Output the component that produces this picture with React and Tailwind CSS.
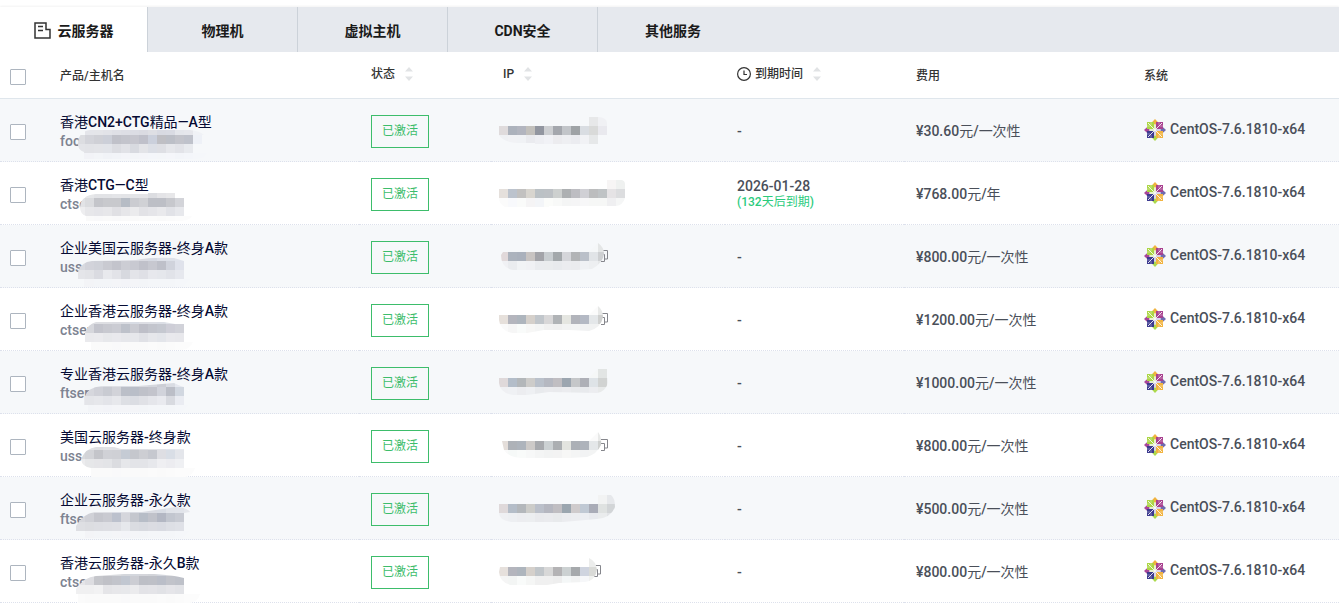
import { useState } from 'react';
import clsx from 'clsx';

const TABS = ['云服务器', '物理机', '虚拟主机', 'CDN安全', '其他服务'];

// Every mask is a strip of 9px blocks, cut off by an outline
const BLOCK = 9;

const SERVERS = [
  {
    id: 1,
    name: '香港CN2+CTG精品—A型',
    host: 'foc',
    price: '¥30.60元/一次性',
    hostMask: {
      outline: 'M2 18C2 9 7 5 14 4H114Q124 5 128 9L126 18H117V27H131Q129 32 122 33H8V26Q2 24 2 18Z',
      blocks: [
        '- e4e5ea e4e5e9 e2e3e8 dfe0e6 dddee5 dcdde4 dadbe2 dedfe4 d8dae2 d9dbe3 e4e6eb e6e7ec f0f2f6 f1f3f7',
        'dcdde1 d3d4da cfd0d6 cccfd8 c0c1c9 c3c4cc c6c6ce bfc0ca cbd0dc bfbfc4 bcbfc7 c3c4cb bfc2cb eef1f7',
        'e3e4e8 e2e3e7 e3e4e8 e2e4e9 dcdde2 e1e2e7 d8dae0 e3e4e8 dcdfe6 dedfe4 e6e7eb e2e3e8 e8eaee',
        'f2f3f7 f2f3f7 f3f5f8 f1f3f7 f2f4f8 f4f5f9 f3f5f8 f4f5f9 f4f6fa f4f6f9 f5f6fa f3f5f9 f4f6fa f5f7fa f5f7fa',
      ],
    },
    ipMask: {
      outline: 'M0 9H90V0H100Q108 1 108 6V18H99V27H36V26H18Q4 25 0 18Z',
      blocks: [
        '- - - - - - - - - - e7e8e9 f0f1f4',
        'dfdbdc acb2bc b2b5bf c2c0bc 9296a0 cdcfd2 a4a7ad c2c5c9 9fa3a6 d9dde2 d9dad9 e9e9ee',
        'eff1f4 f1f2f5 f0f2f5 eaebef eeeff3 f1f2f6 ececef eeeff2 ebecf0 f1f2f5 e6e8e9',
      ],
    },
  },
  {
    id: 2,
    name: '香港CTG—C型',
    host: 'ctse',
    expires: '2026-01-28',
    left: '(132天后到期)',
    price: '¥768.00元/年',
    hostMask: {
      outline: 'M4 18Q5 6 20 5H72V4H99V9H108V27H116Q114 31 106 32H10V27Q4 25 4 18Z',
      blocks: [
        '- e6e7e9 e2e3e6 e2e3e6 e4e5e8 e3e4e7 e4e5e8 e4e4e7 dcdde1 e4e4e7 e7e7e9',
        'e2e3e6 dbdcdf c4c5ca c8c9cd c8c9cd b6bcc5 cbccd1 d0d1d5 bdbfc6 bdbfc6 c7c8cd d3d4d9',
        'eeeef0 e7e7ea e5e5e9 e7e7ea e0e0e4 e6e6e9 ebebed e2e2e6 e5e5e9 e9e9ec e1e2e7 e7e8ec',
        'fafafa fafafa f9f9fa fafafa f9f9fa fafafa fafafa fbfbfb fbfbfb fafafa fbfbfb fcfcfc fcfcfc',
      ],
    },
    ipMask: {
      outline: 'M0 9H108V0H123Q126 1 126 4V18Q124 25 117 26H50V27H6Q0 24 0 18Z',
      blocks: [
        '- - - - - - - - - - - - f7f5f5 eff1f0',
        'e5e0dc bcc3cd c2c1c0 d8d5cf bbc1c5 bdc1c5 cdd0cf adb0b2 bdbdc2 d0d0d5 bcbdbe bfc3c5 e5e3e5 dcdddf',
        'fbfbfb f8f9fc fafbfa f5f4f5 f3f5f8 fbfcfa f8f9f8 f4f5f5 f5f5f6 f7f7f8 f6f7f6 f6f7f6 efeff1 f5f6f6',
      ],
    },
  },
  {
    id: 3,
    name: '企业美国云服务器-终身A款',
    host: 'uss',
    price: '¥800.00元/一次性',
    hostMask: {
      outline: 'M2 27V20Q5 10 16 9L60 8Q75 5 98 6L108 9V27H114L106 35H8V27Z',
      blocks: [
        '- dedfe5 dedfe5 dedfe5 dedfe5 dcdde3 dbdce2 d9dae1 d6dae3 dde0e8 dde1e9 e0e4ec',
        'd8dae0 d2d3da cfd1d8 c9cad1 c3c4cc cccdd4 c8c9d1 c0c1ca c7c8d0 bec0c9 d0d3dc dfe2eb',
        'e4e5e9 e2e3e7 dadbe1 e8e9ed e2e3e8 d7d9df e3e4e9 dfe0e6 e7e8ed e5e7ec e1e3e9 e6e8ee',
        'f3f4f7 f3f4f7 f3f5f8 f3f5f8 f4f5f8 f3f4f8 f4f5f8 f3f5f8 f4f6f9 f4f6f9 f4f6f9 f5f7fa f5f7fa',
      ],
    },
    ipMask: {
      outline: 'M4 9H90L99 0Q105 4 105 11Q104 20 93 26L78 27H14Q2 25 2 12Z',
      blocks: [
        '- - - - - - - - - - f5f7f8 e4e6e6',
        'e1d9da acb3bd aab1bc c8c4c2 a3a4a9 c8cdd0 a3a8ab d5d6da b2b4b6 bac0c9 e1e4e7 ced0d2',
        'f0f1f4 eaecef f1f3f5 f0f1f4 eaecef eaecee e8eaed ebecef eaebee eff1f4 edeff1 e6e8e9',
      ],
    },
    copyIcon: 'left-[110px]',
  },
  {
    id: 4,
    name: '企业香港云服务器-终身A款',
    host: 'ctser',
    price: '¥1200.00元/一次性',
    hostMask: {
      outline: 'M9 27V18Q12 9 20 7H88L99 9H108V27H117Q114 34 106 35H15V27Z',
      blocks: [
        '- dddee2 dedfe3 dedfe3 dcdde2 dadce2 d8dce4 dddee4 dddfe5 dbdee5 e0e3e9 e5e8ed',
        '- d6d7dc c3c4cc c8c9d0 cbccd3 bdc1ca cacbd2 bebfc8 c3c5cd c5c8d0 ceced7 d1d2d9',
        'efeff1 eaeaed ebebee e7e8eb e9e9ed e6e7eb e6e7eb e0e1e6 e6e7eb e3e5ea e9e9ed e8e8ec',
        '- fafafa fafafa fafafa f9f9fa fafafa fafafa fafafa fbfbfb fafafa fbfbfb fcfcfc fcfcfc',
      ],
    },
    ipMask: {
      outline: 'M0 9H90L99 0Q104 4 104 11Q102 22 90 25L70 24L45 24L28 27H14Q1 25 0 14Z',
      blocks: [
        '- - - - - - - - - - fbfbfb e8e9e8',
        'e6e0db b4b5bd aeb5bd d5d0cb c1c6cb d8d7d8 b0b3b6 e5e6e1 b2b4bb b4b9c4 e4e7e9 cfd0cf',
        'fafafa f6f6f6 f9fbfa f7f7f6 f4f5f5 f1f1f1 f0f0f0 f2f3f3 f3f4f4 f1f2f3 f1f2f2 f2f2f1',
      ],
    },
    copyIcon: 'left-[110px]',
  },
  {
    id: 5,
    name: '专业香港云服务器-终身A款',
    host: 'ftser',
    price: '¥1000.00元/一次性',
    hostMask: {
      outline: 'M8 27V20Q12 9 25 8H62L98 5Q104 8 108 9V27H112L106 34H12V27Z',
      blocks: [
        '- dfe0e5 dfe0e5 dcdde2 dfe0e5 d9dce3 d9dbe1 d9dae0 d5d7dd ccced5 d9dce3 e5e8ef',
        '- d6d7dd d0d1d8 c9cbd2 d2d3d9 bbbfc8 b9bec8 bfc1c9 c3c4cc d1d3db bbbec7 d1d7e0',
        'e9eaee e4e5e9 e6e7eb e3e4e9 e7e8ec dddfe4 dbdde3 e0e1e6 e5e6eb e9eaef d8dae0 eaecf2',
        '- f3f5f8 f4f5f8 f3f4f8 f4f5f8 f4f5f8 f4f5f8 f3f5f8 f4f6f9 f4f6f9 f4f6f9 f5f7fa f5f7fa',
      ],
    },
    ipMask: {
      outline: 'M0 9H90L99 0H108L109 14Q106 23 98 24L50 23L28 26H14Q1 24 0 14Z',
      blocks: [
        '- - - - - - - - - - f5f7f7 e2e5e4',
        'dfd9da b3bdc9 b3b7ba cdccca bac1cb b5b8c1 c0bec2 9ca6b0 c5c7c9 aeb0b7 dee3e7 d1d3d2 eef0f2',
        'eff0f3 eff1f4 ecedf0 eef0f3 e8eaed eaebee e9eaed ebecef e8eaec e8eaed ecedf0 e8eaea eef0f2',
      ],
    },
  },
  {
    id: 6,
    name: '美国云服务器-终身款',
    host: 'uss',
    price: '¥800.00元/一次性',
    hostMask: {
      outline: 'M5 18Q10 7 20 6H38L45 8H108V27H119Q116 35 110 36H15V27Q6 26 5 18Z',
      blocks: [
        '- e1e2e4 dedfe2 e1e2e5 e0e1e5 dcdfe4 dbdce0 dfe0e4 e2e3e6 e2e3e8 e2e6ed e8eaee',
        'd8d9dc d3d4d8 c4c5ca d0d1d6 cfd0d5 c5cbd4 c5c7cd cdced3 c6c8cf dedee3 d9dee6 e4e6eb',
        'ececee e6e7e9 e5e5e8 e3e4e7 dbdce0 e6e7ea e3e4e8 e3e4e8 e7e8ec efeff2 ececf0 eff0f3',
        '- fafafa fafafa fafafa f9f9fa fafafa fafafa fafafa fbfbfb fafafa fbfbfb fcfcfc fcfcfc fcfcfc',
      ],
    },
    ipMask: {
      outline: 'M3 9H90L99 0Q103 5 102 13Q98 22 88 25L70 26H32Q10 27 5 18Z',
      blocks: [
        '- - - - - - - - - - fafafa e8e9e8',
        'e4deda aeb2b8 aeb4bc cdcac8 a8aaae ccd1d3 acafb2 e3e4df acb0b6 aeb3bb e4e7e9 ced0cf',
        'fafafa f6f9f8 f9fbfa f7f8f8 f4f5f5 f2f3f3 f3f3f3 f7f7f6 f4f5f5 f2f3f4 f3f4f4 f2f2f1',
      ],
    },
    copyIcon: 'left-[110px]',
  },
  {
    id: 7,
    name: '企业云服务器-永久款',
    host: 'ftse',
    price: '¥500.00元/一次性',
    hostMask: {
      outline: 'M0 27V22Q7 10 18 8H66L100 3Q112 4 114 8L108 9V27H114L106 34H8V27Z',
      blocks: [
        'e4e5e9 e0e1e5 dfe0e5 dedfe4 dbdde5 dddee4 d9dce3 d8dbe2 d9dbe2 d8dce4 e0e3e9 e1e4ea e5e7ec',
        'd6d7dc d0d1d7 c5c6cd c9cad1 bcc1cd d5d6dc c4c7ce b7bdc7 c0c2ca b3b7c3 c2c6cf c8cbd3 d3d9e2',
        'dedfe3 dcdde1 dddee3 dedfe4 dfe0e5 e6e8ec dadce1 d8dae0 dbdce2 d9dbe2 dddfe5 dfe1e7 e5e7ec',
        '- f3f4f7 f3f5f8 f3f5f8 f4f5f8 f3f4f8 f4f5f8 f3f5f8 f4f6f9 f4f6f9 f4f6f9 f5f7fa f5f7fa',
      ],
    },
    ipMask: {
      outline: 'M0 9H99V0H112Q116 3 116 12Q112 23 98 24L64 27H12Q0 25 0 18Z',
      blocks: [
        '- - - - - - - - - - - f2f3f3 e6e8eb',
        'dfd9da b4bdc8 b3b7bb ccccc9 bbc0ca b5b7c0 c0bec2 9ba6af cfcbcc c0c9d4 a9acb7 dfe2e1 d2d5d7',
        'eff0f3 edeff2 ecedf0 eceef0 e9eaed eaebee e8eaec ebecef ecedf0 eceef2 e8eaee eaeced e2e4e7',
      ],
    },
  },
  {
    id: 8,
    name: '香港云服务器-永久B款',
    host: 'ctse',
    price: '¥800.00元/一次性',
    hostMask: {
      outline: 'M0 27V22Q8 10 20 9L48 7H78Q98 8 108 11V27H124Q122 35 114 36H2V27Z',
      blocks: [
        '- e1e1e4 dcdde1 dadbdf d8dade d4d7dc d4d7dd d5d6db d2d4d9 d2d5dc d8dade d9dbdf',
        'e5e5e8 dddde1 c5c6cb c0c1c7 c2c4cb c1c7d1 cccdd3 bdbfc6 bec0c7 babec8 c1c3ca bec1c9',
        'f0f0f1 f0f0f1 f2f2f3 e5e5e8 e7e7ea e7e8eb ebebed e3e3e7 e4e4e8 e1e2e6 e5e5e9 e2e3e7',
        'fbfbfb fafafa fafafa fafafa fafafa f9f9fa fafafa fafafa fafafa fbfbfb fafafa fbfbfb fcfcfc fcfcfc',
      ],
    },
    ipMask: {
      outline: 'M1 9H90V0Q97 3 98 12Q96 23 86 24L60 25L48 27H12Q1 25 0 14Z',
      blocks: [
        '- - - - - - - - - - ecedec',
        'e6e0dc b4b5bd aeb5bd d5d0cb c1c6ca d8d8d8 b4b3b5 ccd1d2 a6a9ac cfd4df d9dad7',
        'f5f5f5 f3f5f4 f9fbfa f5f6f5 f0f0f0 f0f0f0 eeeeee f4f7f7 f2f3f3 f6f7f9 f0f1ef',
      ],
    },
    copyIcon: 'left-[103px]',
  },
];

function Mask({ id, mask, className }) {
  return (
    <svg className={clsx('pointer-events-none absolute', className)} width="144" height="36" shapeRendering="crispEdges" aria-hidden="true">
      <clipPath id={id}>
        <path d={mask.outline} />
      </clipPath>
      <g clipPath={`url(#${id})`}>
        {mask.blocks.map((line, y) =>
          line.split(' ').map((color, x) =>
            color === '-' ? null : (
              <rect key={`${x}-${y}`} x={x * BLOCK} y={y * BLOCK} width={BLOCK} height={BLOCK} fill={`#${color}`} />
            )
          )
        )}
      </g>
    </svg>
  );
}

function CopyIcon() {
  return (
    <svg width="8" height="14" viewBox="0 0 8 14" fill="none" stroke="#85868c" aria-hidden="true">
      <path d="M0 1.5h6.500v8.500h-3M0 5.500h3.500v7H0" />
    </svg>
  );
}

function ServerIcon() {
  return (
    <svg width="17" height="17" viewBox="0 0 17 17" fill="none" stroke="#333" strokeWidth="1.500" aria-hidden="true">
      <path d="M12 7.500V1H1v15h15V7.500h-4.700" />
      <path d="M4 4.500h5M4 8.500h5" />
    </svg>
  );
}

function ClockIcon() {
  return (
    <svg width="14" height="14" viewBox="0 0 14 14" fill="none" stroke="#333" strokeWidth="1.200" aria-hidden="true">
      <circle cx="7" cy="7" r="6.400" />
      <path d="M7 3.500V7.500h3" />
    </svg>
  );
}

function SortIcon() {
  return (
    <svg width="8" height="14" viewBox="0 0 8 14" fill="#e1e3e5" aria-hidden="true">
      <path d="M4 0l4 4.500H0zM4 14L0 9.500h8z" />
    </svg>
  );
}

function CentosIcon() {
  return (
    <svg width="22" height="22" viewBox="0 0 22 22" className="shrink-0" aria-hidden="true">
      <path d="M11 0l2.800 3-2.800 3-2.800-3z" fill="#f0b33f" />
      <path d="M22 11l-3 2.800-3-2.800 3-2.800z" fill="#6f6bb0" />
      <path d="M11 22l-2.800-3 2.800-3 2.800 3z" fill="#acd94c" />
      <path d="M0 11l3-2.800 3 2.800-3 2.800z" fill="#a8479a" />
      <path d="M3 3h7v7H3z" fill="#acd645" />
      <path d="M12 3h7v7h-7z" fill="#a8408f" />
      <path d="M3 12h7v7H3z" fill="#3d3b90" />
      <path d="M12 12h7v7h-7z" fill="#f2b440" />
      <path d="M11 5.500V11H5.500" stroke="#d3e6a4" fill="none" />
      <path d="M11 16.500V11h5.500" stroke="#b9aed4" fill="none" />
      <path d="M4 4l14 14M18 4L4 18" stroke="#fff" strokeWidth="1" opacity="0.850" />
      <path d="M7 3v3M15 3v3M7 19v-3M15 19v-3M3 7h3M3 15h3M19 7h-3M19 15h-3" stroke="#fff" strokeWidth="0.600" opacity="0.600" />
    </svg>
  );
}

function Checkbox(props) {
  return (
    <input
      type="checkbox"
      className="mt-1 block size-4 appearance-none rounded-[1px] border border-[#adb5bf] bg-white checked:bg-[#3dbd6b]"
      {...props}
    />
  );
}

function SortButton({ children }) {
  return (
    <button type="button" className="flex items-center gap-2.5 pb-0.5">
      {children}
      <SortIcon />
    </button>
  );
}

// CJK glyphs stay regular while latin letters and digits are medium
function MixedText({ text }) {
  return text.split(/([\u4e00-\u9fff]+)/).map((part, i) => (
    <span key={i} className={i % 2 ? 'font-normal' : 'font-medium'}>
      {part}
    </span>
  ));
}

export default function App() {
  const [tab, setTab] = useState(TABS[0]);
  const [selected, setSelected] = useState([]);

  const toggle = (id) => {
    setSelected((ids) => (ids.includes(id) ? ids.filter((i) => i !== id) : [...ids, id]));
  };

  const toggleAll = () => {
    setSelected(selected.length === SERVERS.length ? [] : SERVERS.map((s) => s.id));
  };

  return (
    <div className="bg-white pt-[7px] font-[Roboto,'Noto_Sans_CJK_SC',sans-serif] text-sm text-[#4a4f59]">
      {/* Service tabs */}
      <nav className="flex h-[45px] bg-[#e6e9ee] shadow-[0_-1px_2px_rgba(0,0,0,0.05)]">
        {TABS.map((name, i) => (
          <button
            key={name}
            type="button"
            onClick={() => setTab(name)}
            className={clsx(
              'flex items-center justify-center gap-[7px] pt-0.5 font-bold text-[#1a1a1a]',
              i === 0 ? 'w-[148px]' : 'w-[150px]',
              i < TABS.length - 1 && 'border-r border-[#ccd2d9]',
              tab === name && 'bg-white'
            )}
          >
            {i === 0 && <ServerIcon />}
            {name}
          </button>
        ))}
      </nav>

      {/* Server list */}
      <div className="overflow-x-auto">
        <table className="w-full table-fixed border-separate border-spacing-0 text-left">
          <colgroup>
            <col className="w-[48px]" />
            <col className="w-[311px]" />
            <col className="w-[132px]" />
            <col className="w-[234px]" />
            <col className="w-[179px]" />
            <col className="w-[228px]" />
            <col className="w-[207px]" />
          </colgroup>
          <thead>
            <tr className="h-[47px] text-xs text-[#333] *:border-b *:border-[#dfe6ec] *:px-3 *:py-0 *:font-medium">
              <th className="pl-2.5!">
                <Checkbox aria-label="全选" checked={selected.length === SERVERS.length} onChange={toggleAll} />
              </th>
              <th className="pt-0.5!">产品/主机名</th>
              <th>
                <SortButton>状态</SortButton>
              </th>
              <th>
                <SortButton>IP</SortButton>
              </th>
              <th>
                <SortButton>
                  <span className="flex items-center gap-1">
                    <ClockIcon /> 到期时间
                  </span>
                </SortButton>
              </th>
              <th className="pt-0.5!">费用</th>
              <th className="pt-0.5!">系统</th>
            </tr>
          </thead>
          <tbody>
            {SERVERS.map((s) => (
              <tr
                key={s.id}
                className="h-[63px] odd:bg-[#f6f8fa] *:border-b *:border-dotted *:border-[#dde1ec] *:px-3 *:py-0"
              >
                <td className="pl-2.5!">
                  <Checkbox aria-label={s.name} checked={selected.includes(s.id)} onChange={() => toggle(s.id)} />
                </td>
                <td className="relative pt-0.5!">
                  <a href="#" className="block leading-5 text-[#060b33]">
                    <MixedText text={s.name} />
                  </a>
                  <span className="block leading-[18px] font-medium text-[#7d8391]">{s.host}</span>
                  <Mask id={`host-${s.id}`} mask={s.hostMask} className="top-[27px] left-7" />
                </td>
                <td>
                  <span className="mt-0.5 flex h-[33px] w-[58px] items-center justify-center border border-[#3dbd6b] text-xs text-[#3dbd6b]">
                    已激活
                  </span>
                </td>
                <td className="relative">
                  {s.copyIcon && (
                    <span className={clsx('absolute top-6', s.copyIcon)}>
                      <CopyIcon />
                    </span>
                  )}
                  <Mask id={`ip-${s.id}`} mask={s.ipMask} className="top-[18px] left-2" />
                </td>
                <td className="pt-0.5! font-medium">
                  {s.expires ? (
                    <>
                      <span className="block leading-4">{s.expires}</span>
                      <span className="block text-xs leading-4 text-[#2bcb7d]">
                        <MixedText text={s.left} />
                      </span>
                    </>
                  ) : (
                    '-'
                  )}
                </td>
                <td className="pt-0.5!">
                  <MixedText text={s.price} />
                </td>
                <td>
                  <span className="flex items-center gap-1 font-medium whitespace-nowrap">
                    <CentosIcon />
                    <span className="pb-0.5">CentOS-7.6.1810-x64</span>
                  </span>
                </td>
              </tr>
            ))}
          </tbody>
        </table>
      </div>
    </div>
  );
}
